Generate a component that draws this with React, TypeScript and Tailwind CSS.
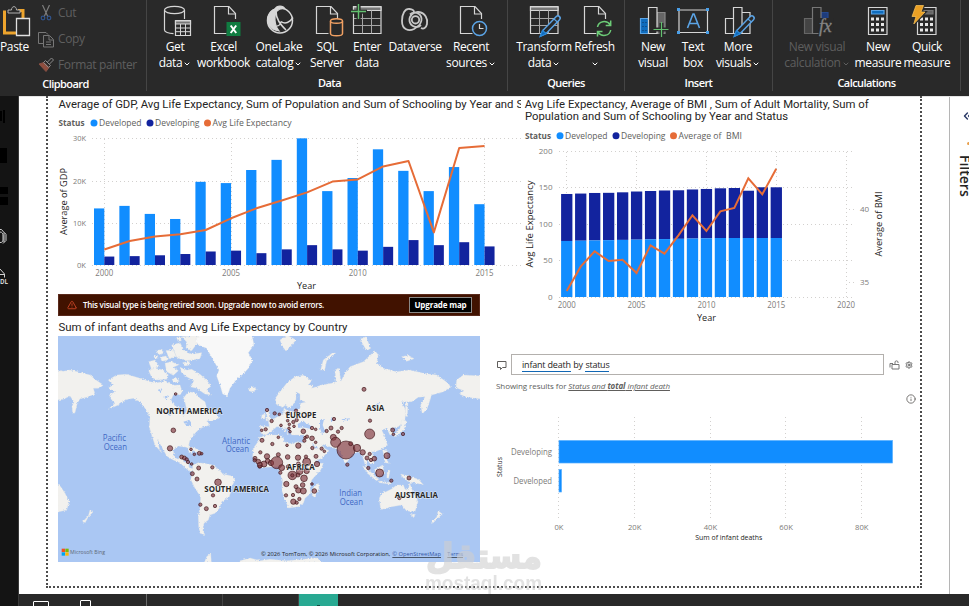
import type { ReactNode } from 'react'
import { TriangleAlert, Settings, Info, ChevronDown, ChevronsLeft } from 'lucide-react'

const BLUE = '#118dff'
const NAVY = '#12239e'
const ORANGE = '#e66c37'

const gdpDeveloped = [13.4, 14, 12.1, 10.9, 19.7, 19.4, 22.5, 24.9, 30, 17.5, 20.6, 27.4, 22.3, 17.5, 23.2, 14.4]
const gdpDeveloping = [2, 2.1, 2.3, 2.6, 3.2, 3.4, 2.8, 3.7, 4.7, 3.7, 3.4, 4.3, 5.9, 4.7, 5.4, 4.4]
const gdpLine = [153.5, 145, 140.5, 138.3, 134, 122.3, 112.3, 104.5, 96.4, 85.6, 83.4, 70.4, 65, 136.4, 52, 50]

const lifeTotal = [141.4, 142, 142.8, 143, 143.7, 144.8, 145.5, 146.2, 146.5, 147.6, 148.3, 149.2, 149.6, 145.9, 150.6, 150.6]
const bmiLine = [195, 170.7, 155.3, 165, 163.7, 177, 149.3, 157.7, 139.3, 119.3, 135, 115.3, 112, 82.3, 98.3, 72.7]

type LabelProps = {
  x: number
  y: number
  w?: number
  size?: number
  fill?: string
  weight?: number
  anchor?: 'start' | 'middle' | 'end'
  font?: string
  rotate?: boolean
  children: ReactNode
}

function Label({ x, y, w, size = 9, fill = '#605e5c', weight = 400, anchor = 'start', font = 'Open Sans', rotate, children }: LabelProps) {
  return (
    <text
      x={x}
      y={y}
      textLength={w}
      lengthAdjust="spacingAndGlyphs"
      fontSize={size}
      fill={fill}
      fontWeight={weight}
      textAnchor={anchor}
      fontFamily={`"${font}", "Noto Sans", sans-serif`}
      transform={rotate ? `rotate(-90 ${x} ${y})` : undefined}
    >
      {children}
    </text>
  )
}

/* ---------- ribbon icons, all on a 32px grid ---------- */

function Icon({ children }: { children: ReactNode }) {
  return (
    <svg width="32" height="32" viewBox="0 0 32 32" fill="none" stroke="#d6d6d6" strokeWidth="1.2" className="shrink-0 overflow-visible">
      {children}
    </svg>
  )
}

const Page = ({ x = 5.5 }: { x?: number }) => (
  <g transform={`translate(${x} 0)`}>
    <path d="M12 28.5H0V1.5h14.5l6.500 7V14" />
    <path d="M14 1.5v7.5h7" />
  </g>
)

const Pencil = () => (
  <g>
    <path d="M13 30.8l2-5.5L28.3 11.6c1-1 2.4-.8 3.2 0s.9 2.1 0 3.1L18.2 28.4z" fill="#292929" stroke="#5ba4e6" strokeWidth="1.5" />
    <path d="M12 31.5l2.4-6 4 3.200z" fill="#0f6cbd" stroke="#2b88d8" />
    <path d="M26 14l3.4 3" stroke="#5ba4e6" />
  </g>
)

const Grid = () => (
  <g>
    <path d="M2.5 1.5H30v27H2.5z" />
    <path d="M2.5 2H30v3.5H2.5z" fill="#777" />
    <path d="M11.5 5.5v23M20.5 5.5v23M3 13.5h27M3 20.5h27" strokeWidth="1" stroke="#a5a5a5" />
  </g>
)

const Calculator = () => (
  <g>
    <path d="M6.5 2.5H25v27H6.5z" />
    {[12.5, 18, 23.5].map((y) =>
      [9, 14, 19].map((x) => <rect key={`${x}-${y}`} x={x} y={y} width="3" height="3" fill="#e6e6e6" stroke="none" />),
    )}
  </g>
)

const icons: Record<string, ReactNode> = {
  get: (
    <Icon>
      <ellipse cx="15.5" cy="5" rx="10" ry="3.7" />
      <path d="M5.5 5v20c0 2 4 3.600 9 3.700M25.5 5v9" />
      <path d="M16.5 15.500h15v15h-15z" fill="#292929" />
      <path d="M16.5 16h15v3h-15z" fill="#777" />
      <path d="M21.5 19v11M26.5 19v11M17 23h14M17 26.700h14" strokeWidth="1" />
    </Icon>
  ),
  excel: (
    <Icon>
      <Page x={6.5} />
      <rect x="18.5" y="17" width="14" height="14" fill="#107c41" stroke="none" />
      <path d="M22.700 20.500l5.500 7.500M28.200 20.500l-5.500 7.500" stroke="#fff" strokeWidth="2" />
    </Icon>
  ),
  onelake: (
    <Icon>
      <circle cx="17" cy="15.5" r="12.5" strokeWidth="1.5" />
      <path d="M12 4c2-4 8-4 10 0-4-1-6 0-8 2-3 4-3 14 2 20-8-1-13-7-11-14 1-4 4-7 7-8z" fill="#d6d6d6" />
      <path d="M13 6c0 8 4 13 10 19M18 16.500c4 3 9 1 12-4M13.500 21c2 0 4-1.500 4.500-4.500" strokeWidth="1.5" />
    </Icon>
  ),
  sql: (
    <Icon>
      <Page />
      <path d="M19.5 16v12.500c0 3 12 3 12 0V16" fill="#292929" stroke="#f0a063" strokeWidth="1.5" />
      <ellipse cx="25.5" cy="16" rx="6" ry="2.3" fill="#292929" stroke="#f0a063" strokeWidth="1.5" />
    </Icon>
  ),
  enter: (
    <Icon>
      <Grid />
      <path d="M0 6.700h16M7.600-1v16" stroke="#292929" strokeWidth="4" />
      <path d="M0 6.500h15M7.500-1v15" stroke="#62c06f" strokeWidth="1.4" />
    </Icon>
  ),
  dataverse: (
    <Icon>
      <g strokeWidth="1.8" stroke="#c8c8c8">
        <circle cx="16.500" cy="14.800" r="3.700" />
        <path d="M22 20c-3.500 3.500-10.500 2-11.500-4-.8-5.500 4.500-9.500 9-9 7 1 9.500 7 8.500 12-.8 4-3.500 5.500-6 4" />
        <path d="M11 9.500C14.500 6 21.500 7.500 22.500 13.500c.8 5.500-4 8.500-7.500 10.500-5 2.500-12 1-12-8C3 8.500 6 3.500 10.500 4c2.500.300 5 1.500 4.500 3.500" />
      </g>
    </Icon>
  ),
  recent: (
    <Icon>
      <Page />
      <circle cx="24.5" cy="23.5" r="7" fill="#292929" stroke="#5ba4e6" strokeWidth="1.5" />
      <path d="M24.5 19v4.500h4" />
    </Icon>
  ),
  transform: (
    <Icon>
      <Grid />
      <Pencil />
    </Icon>
  ),
  refresh: (
    <Icon>
      <Page />
      <circle cx="25" cy="23.5" r="9" fill="#292929" stroke="none" />
      <path d="M18.5 22c1-6 9-7.500 13-2M31.700 15.500v5h-5M31.700 25c-1 6-9 7.500-13 2M18.500 31.500v-5h5" stroke="#6ccb77" strokeWidth="1.500" />
    </Icon>
  ),
  newVisual: (
    <Icon>
      <path d="M3.5 13.500h8v15h-8z" fill="#0f6cbd" stroke="#5ba4e6" />
      <path d="M20 7.500h8v21h-8z" fill="#666" stroke="#888" />
      <path d="M11.5 2.500H20v26h-8.500z" fill="#292929" />
      <path d="M6 17v9M9 17v9" stroke="#123e70" strokeDasharray="1 3" />
      <path d="M24.500 18v13M18 24.500h13" stroke="#292929" strokeWidth="4" />
      <path d="M24.500 17v15M16.500 24.500h15" stroke="#62c06f" strokeWidth="1.200" />
    </Icon>
  ),
  textBox: (
    <Icon>
      <path d="M2 5h28.500v22.500H2z" />
      <path d="M10.500 23l5.500-14h1l5.500 14M12.500 18.500h8" stroke="#5ba4e6" strokeWidth="1.600" />
      {[1.5, 30.5].map((x) =>
        [4.5, 27.5].map((y) => <rect key={`${x}-${y}`} x={x - 1.5} y={y - 1.5} width="3" height="3" fill="#4a9fe8" stroke="none" />),
      )}
    </Icon>
  ),
  more: (
    <Icon>
      <path d="M3.500 13.500h8v15h-8zM11.500 2.500H20v26h-8.500zM20 7.500h8v21h-8z" />
      <Pencil />
    </Icon>
  ),
  calc: (
    <Icon>
      <path d="M3.500 13.500h8v15h-8z" fill="#444" stroke="#666" />
      <path d="M20 7.500h7v6h-7z" fill="#1d3c7c" stroke="#25498f" />
      <path d="M11.500 2.500H20v26h-8.500z" fill="#292929" stroke="#777" />
      <rect x="17.500" y="13" width="15" height="17" fill="#292929" stroke="none" />
      <text x="18" y="26.500" fontSize="18" fontStyle="italic" fontFamily="'Liberation Serif', serif" fill="#858585" stroke="#858585" strokeWidth=".3">
        fx
      </text>
    </Icon>
  ),
  measure: (
    <Icon>
      <Calculator />
      <path d="M9.500 5.500H22V9H9.500z" fill="#0f6cbd" stroke="#5ba4e6" />
    </Icon>
  ),
  quick: (
    <Icon>
      <Calculator />
      <path d="M12 5.500h10V9H12z" fill="#666" stroke="#777" />
      <path d="M5 0h8.500l-2 6.500h4L2 21l2.500-9H0z" fill="#292929" stroke="#292929" />
      <path d="M5 .5h7.500L10 7h4L2.800 19 5 11.500H1z" fill="#eaa024" stroke="#ffc75a" strokeWidth=".7" />
    </Icon>
  ),
}

type ButtonProps = { icon: string; top: string; bottom?: string; width: string; menu?: boolean; disabled?: boolean }

function RibbonButton({ icon, top, bottom, width, menu, disabled }: ButtonProps) {
  return (
    <div className={`flex shrink-0 flex-col items-center whitespace-nowrap text-xs leading-4 tracking-[-0.35px] ${width} ${disabled ? 'text-[#5e5e5e]' : 'text-white'}`}>
      {icons[icon]}
      <span className="mt-0.5">{top}</span>
      <span className="flex h-4 items-center">
        {bottom}
        {menu && <ChevronDown size={8} strokeWidth={3} className="ml-px mt-px" />}
      </span>
    </div>
  )
}

function RibbonGroup({ name, className, children }: { name: string; className: string; children?: ReactNode }) {
  return (
    <section className={`flex h-[91px] shrink-0 flex-col border-r border-[#454545] pt-[5px] ${className}`}>
      <div className="flex h-[71px]">{children}</div>
      <h3 className="text-center text-[11px] font-semibold leading-4 tracking-[-0.55px] text-white">{name}</h3>
    </section>
  )
}

function Ribbon() {
  return (
    <header className="flex h-24 bg-[#292929]">
      <section className="flex h-[91px] w-[147px] shrink-0 flex-col border-r border-[#454545] pt-[5px]">
        <div className="flex h-[71px]">
          <div className="w-[38px] text-xs leading-4 tracking-[-0.35px] text-white">
            <svg width="32" height="32" viewBox="0 0 32 32" fill="none">
              <path d="M4.500 5.500V28H17M18 5.500h5V13" stroke="#eda42d" strokeWidth="3" />
              <path d="M8 8V5h3.500c0-4.500 5-4.500 5 0H20v3z" fill="#292929" stroke="#b0b0b0" />
              <path d="M16.500 13.500h13v17h-13z" fill="#292929" stroke="#e0e0e0" strokeWidth="1.300" />
            </svg>
            <span className="mt-0.5 block">Paste</span>
          </div>
          <div className="-mt-[5px] flex flex-col text-xs leading-4 tracking-[-0.35px] text-[#5f5f5f]">
            <div className="flex h-[26px] shrink-0 items-center gap-1">
              <svg width="16" height="16" viewBox="0 0 16 16" fill="none" stroke="#7d7d7d" strokeWidth="1.200">
                <path d="M4.500 0l5.500 12M11.500 0L6 12" />
                <g stroke="#31548c">
                  <circle cx="5" cy="13" r="1.800" />
                  <circle cx="11" cy="13" r="1.800" />
                </g>
              </svg>
              <span>Cut</span>
            </div>
            <div className="flex h-[26px] shrink-0 items-center gap-1">
              <svg width="16" height="17" viewBox="0 0 16 17" fill="none" stroke="#777">
                <path d="M5 12.500H.5V1.500H8l2 2M5.500 4.500h6l4 4v7.500h-10zM11 5v4h4M8 11h5M8 13.500h5" />
              </svg>
              <span>Copy</span>
            </div>
            <div className="flex h-[26px] shrink-0 items-center gap-1">
              <svg width="16" height="16" viewBox="0 0 16 16" fill="none" stroke="#8a8a8a">
                <path d="M1 7l5-1.500 5 5-3 4z" fill="#8f4e3f" stroke="#885044" />
                <path d="M5.500 5.500l2-2 5 5-2 2zM9.500 5l4-4 2 2-4 4" />
              </svg>
              <span>Format painter</span>
            </div>
          </div>
        </div>
        <h3 className="pr-[15px] text-center text-[11px] font-semibold leading-4 tracking-[-0.55px] text-white">Clipboard</h3>
      </section>
      <RibbonGroup name="Data" className="w-[361px] pl-[5px]">
        <RibbonButton icon="get" top="Get" bottom="data" menu width="w-[46px]" />
        <RibbonButton icon="excel" top="Excel" bottom="workbook" width="w-[51px]" />
        <RibbonButton icon="onelake" top="OneLake" bottom="catalog" menu width="w-[60px]" />
        <RibbonButton icon="sql" top="SQL" bottom="Server" width="w-9" />
        <RibbonButton icon="enter" top="Enter" bottom="data" width="w-11" />
        <RibbonButton icon="dataverse" top="Dataverse" width="w-[52px]" />
        <RibbonButton icon="recent" top="Recent" bottom="sources" menu width="w-[60px]" />
      </RibbonGroup>
      <RibbonGroup name="Queries" className="w-[117px] pl-[7px] pr-[7px]">
        <RibbonButton icon="transform" top="Transform" bottom="data" menu width="w-[58px]" />
        <RibbonButton icon="refresh" top="Refresh" menu width="w-[43px]" />
      </RibbonGroup>
      <RibbonGroup name="Insert" className="w-[148px] pl-2 pr-2">
        <RibbonButton icon="newVisual" top="New" bottom="visual" width="w-10" />
        <RibbonButton icon="textBox" top="Text" bottom="box" width="w-10" />
        <RibbonButton icon="more" top="More" bottom="visuals" menu width="w-[50px]" />
      </RibbonGroup>
      <RibbonGroup name="Calculations" className="w-[188px] pl-1.5 pr-1.5">
        <RibbonButton icon="calc" top="New visual" bottom="calculation" menu disabled width="w-[76px]" />
        <RibbonButton icon="measure" top="New" bottom="measure" width="w-[46px]" />
        <RibbonButton icon="quick" top="Quick" bottom="measure" width="w-[52px]" />
      </RibbonGroup>
    </header>
  )
}

/* ---------- visuals ---------- */

const gridStroke = { stroke: '#d2d0ce', strokeWidth: 1, strokeDasharray: '1 3' }
const titleProps = { size: 11.7, fill: '#252423', font: 'Roboto' }

function GdpChart() {
  const x = (i: number) => 46.3 + i * 25.35
  return (
    <svg width="466" height="198" viewBox="0 0 466 198" className="shrink-0">
      <Label x={0.5} y={11.5} w={455} {...titleProps}>
        Average of GDP, Avg Life Expectancy, Sum of Population and Sum of Schooling by Year and
      </Label>
      <svg x="458.500" y="0" width="4.500" height="16">
        <Label x={0} y={11.5} {...titleProps}>S</Label>
      </svg>
      <Label x={0.5} y={29.8} w={26} weight={700}>Status</Label>
      <circle cx="36" cy="27" r="3.5" fill={BLUE} />
      <Label x={41} y={29.8} w={42.5}>Developed</Label>
      <circle cx="92" cy="27" r="3.5" fill={NAVY} />
      <Label x={97} y={29.8} w={44.5}>Developing</Label>
      <circle cx="149.500" cy="27" r="3.5" fill={ORANGE} />
      <Label x={154.5} y={29.8} w={79}>Avg Life Expectancy</Label>

      {[30, 20, 10, 0].map((v) => (
        <g key={v}>
          <line x1="34" x2="464" y1={Math.round(169 - v * 4.222) + 0.5} y2={Math.round(169 - v * 4.222) + 0.5} {...gridStroke} />
          <Label x={28} y={172 - v * 4.222} size={8} w={v ? 13 : 9} anchor="end" fill="#7d7b79">{`${v}K`}</Label>
        </g>
      ))}
      {[0, 5, 10, 15].map((i) => (
        <g key={i}>
          <line x1={Math.floor(x(i)) + 0.5} x2={Math.floor(x(i)) + 0.5} y1="43" y2="169" {...gridStroke} />
          <Label x={x(i)} y={179.8} w={18} size={8.5} anchor="middle" fill="#7d7b79">{2000 + i}</Label>
        </g>
      ))}
      {gdpDeveloped.map((v, i) => (
        <g key={i}>
          <rect x={x(i) - 10.3} y={169 - v * 4.222} width="10.3" height={v * 4.222} fill={BLUE} />
          <rect x={x(i)} y={169 - gdpDeveloping[i] * 4.222} width="10" height={gdpDeveloping[i] * 4.222} fill={NAVY} />
        </g>
      ))}
      <polyline points={gdpLine.map((v, i) => `${x(i)},${v}`).join(' ')} fill="none" stroke={ORANGE} strokeWidth="2" strokeLinejoin="round" />
      <Label x={9} y={139} size={9.5} w={67} rotate fill="#252423">Average of GDP</Label>
      <Label x={248.5} y={193} size={9.5} w={19} anchor="middle" fill="#252423">Year</Label>
    </svg>
  )
}

function BmiChart() {
  const x = (i: number) => 42.7 + i * 13.97
  const k = 0.7285
  return (
    <svg width="370" height="234" viewBox="0 0 370 234" className="shrink-0">
      <Label x={0.7} y={11.5} w={344} {...titleProps}>
        Avg Life Expectancy, Average of BMI , Sum of Adult Mortality, Sum of
      </Label>
      <Label x={1} y={24.3} w={263} {...titleProps}>Population and Sum of Schooling by Year and Status</Label>
      <Label x={1} y={42.7} w={26} weight={700}>Status</Label>
      <circle cx="36" cy="39.7" r="3.5" fill={BLUE} />
      <Label x={41} y={42.7} w={42.5}>Developed</Label>
      <circle cx="92" cy="39.7" r="3.5" fill={NAVY} />
      <Label x={97} y={42.7} w={44.5}>Developing</Label>
      <circle cx="149.500" cy="39.7" r="3.5" fill={ORANGE} />
      <Label x={154.5} y={42.7} w={43}>Average of</Label>
      <Label x={202} y={42.7} w={16}>BMI</Label>

      {[200, 150, 100, 50, 0].map((v) => (
        <g key={v}>
          <line x1="35" x2="328" y1={Math.floor(201 - v * k) + 0.5} y2={Math.floor(201 - v * k) + 0.5} {...gridStroke} />
          <Label x={28.5} y={203.6 - v * k} size={8} anchor="end" fill="#7d7b79">{v}</Label>
        </g>
      ))}
      {[0, 5, 10, 15, 20].map((i) => (
        <g key={i}>
          <line x1={Math.floor(x(i)) + 0.5} x2={Math.floor(x(i)) + 0.5} y1="56" y2="201" {...gridStroke} />
          <Label x={x(i)} y={212} w={18} size={8.5} anchor="middle" fill="#7d7b79">{2000 + i}</Label>
        </g>
      ))}
      {lifeTotal.map((v, i) => {
        const low = 76.9 + Math.min(i, 11) * 0.37
        return (
          <g key={i}>
            <rect x={x(i) - 5.6} y={201 - v * k} width="11.3" height={(v - low) * k} fill={NAVY} />
            <rect x={x(i) - 5.6} y={201 - low * k} width="11.3" height={low * k} fill={BLUE} />
          </g>
        )
      })}
      <polyline points={bmiLine.map((v, i) => `${x(i)},${v}`).join(' ')} fill="none" stroke={ORANGE} strokeWidth="2" />
      <path d="M325 113.500h5M325 186.500h5" {...gridStroke} />
      <Label x={336} y={116} size={8} fill="#7d7b79">40</Label>
      <Label x={336} y={189} size={8} fill="#7d7b79">35</Label>
      <Label x={9} y={171.5} size={9.5} w={87} rotate fill="#252423">Avg Life Expectancy</Label>
      <Label x={358} y={160.5} size={9.5} w={65} rotate fill="#252423">Average of BMI</Label>
      <Label x={182.5} y={225} size={9.5} w={19} anchor="middle" fill="#252423">Year</Label>
    </svg>
  )
}

// western hemisphere, plus the wrapped edges of Asia and Australia
const landWest = [
  'M50 150 70 154 90 150 120 157 150 165 165 178 190 195 178 205 160 205 165 222 140 232 120 236 112 250 105 278 98 280 96 260 102 245 90 228 70 238 50 240Z',
  'M205 180 230 165 260 163 300 175 330 185 350 188 375 184 400 196 420 195 425 210 400 225 393 240 405 258 425 268 430 290 440 272 436 250 430 235 445 215 465 218 480 235 495 245 500 265 520 270 537 295 520 300 500 303 510 315 480 325 465 340 450 360 446 375 457 395 450 400 440 382 415 378 400 390 402 412 415 418 420 408 433 406 430 425 445 430 448 443 462 447 455 455 440 447 420 428 400 420 380 408 365 380 352 358 358 385 365 398 345 375 335 345 328 320 330 290 315 265 300 245 280 235 255 240 235 255 205 268 225 250 215 240 208 225 225 215 205 205 218 195Z',
  'M420 142 440 150 455 148 480 163 500 180 513 198 500 210 515 225 495 222 470 205 450 200 462 182 440 170 425 158Z',
  'M325 150 345 145 370 150 385 165 380 178 350 180 335 172Z',
  'M326 125 345 120 358 140 335 148Z',
  'M375 130 395 125 415 135 400 142 415 152 400 166 380 155Z',
  'M395 75 420 68 432 92 455 102 485 98 480 116 440 122 410 112Z',
  'M425 50 475 46 488 58 470 72 455 92 438 84 440 66Z',
  'M378 92 400 90 408 108 388 116Z',
  'M398 205 415 200 428 212 420 225 402 220Z',
  'M350 92 366 88 370 100 356 104Z M360 112 378 108 384 120 366 124Z M410 52 420 50 424 62 414 64Z',
  'M342 108 352 106 354 114 344 116Z M396 178 412 174 418 184 402 188Z M428 128 446 124 452 134 434 138Z',
  'M420 380 424 380 M440 383 460 382 478 392 488 398 480 402 462 392Z',
  'M458 435 475 428 490 430 520 435 540 452 548 462 575 468 585 480 575 500 568 530 545 545 538 565 525 580 510 585 505 600 492 610 488 630 495 644 480 640 476 620 475 590 480 560 482 530 465 505 452 478 458 460Z',
  'M625 205 640 200 649 208 638 216 628 213Z',
  'M50 488 62 500 75 520 88 545 80 570 50 577Z',
  'M150 570 159 576 145 590 135 609 128 605 145 588Z',
  'M500 710 512 700 514 726 492 730Z',
]

const landEast = [
  'M33 340 31 318 58 320 55 302 75 295 90 285 100 280 102 264 112 272 130 275 150 266 152 250 168 246 150 240 150 222 138 215 138 238 132 250 118 264 106 256 98 262 78 252 76 235 90 215 110 190 135 170 160 166 185 182 175 195 190 195 185 205 215 195 245 190 258 185 255 150 268 145 272 185 285 160 300 140 340 125 375 92 385 105 380 130 400 145 440 155 480 150 520 160 560 165 595 190 602 202 580 215 545 225 532 265 517 282 512 255 525 230 505 232 485 245 455 245 467 270 465 300 445 320 422 325 432 342 420 345 410 325 395 330 405 350 412 375 395 387 375 395 365 395 372 415 372 430 360 432 350 415 350 440 362 462 350 452 343 425 335 400 320 395 305 405 292 425 285 430 275 405 265 390 240 380 215 372 225 386 237 392 215 415 190 425 175 395 160 365 162 345 125 345 118 330 103 322 115 345 95 320 80 320 62 335 48 345Z',
  'M28 352 55 345 85 345 100 352 102 365 125 372 145 365 165 370 172 385 187 410 200 430 220 430 212 450 185 480 180 500 182 520 165 535 160 550 145 560 115 564 108 545 95 510 98 480 88 455 85 440 65 440 35 443 20 430 8 410 10 385 28 360Z',
  'M205 490 207 505 195 531 187 528 188 505Z',
  'M212 150 220 120 248 98 257 100 230 122 224 150Z',
  'M90 60 112 46 138 60 125 75 108 93 98 80Z',
  'M46 268 55 270 58 290 66 300 46 303 52 288Z M36 284 46 282 44 297 34 296Z',
  'M330 58 348 50 362 85 350 92Z M455 110 475 106 492 116 470 124Z',
  'M455 300 470 302 462 330 440 348 430 350 450 325Z',
  'M467 242 474 246 472 290 466 288Z',
  'M338 438 350 445 386 478 380 482 350 458Z M372 450 398 435 402 460 385 470Z M385 483 425 488 420 492 388 488Z',
  'M398 390 412 392 410 420 418 430 406 428Z M412 455 420 450 416 475 410 472Z',
  'M452 462 475 468 505 478 520 494 500 490 478 486 460 474Z',
  'M388 535 394 522 425 507 440 495 460 495 465 508 475 510 479 490 490 518 504 545 495 575 470 573 455 555 425 560 392 569Z M484 582 496 583 490 593Z',
  'M565 573 577 582 562 596 548 610 543 605 560 592Z',
  'M620 180 640 165 695 168 695 237 650 232 628 222 642 212 618 203Z',
  'M-30 722 0 714 30 722 60 718 110 722 200 714 220 728-30 730Z',
]

const bubbles: [number, number, number][] = [
  [-223, 222, 4], [-230, 331, 7], [-240, 385, 8], [-177, 388, 4], [-167, 403, 4], [-152, 400, 6], [-145, 401, 4], [-205, 411, 6], [-197, 414, 6], [-190, 418, 5],
  [-186, 426, 5], [-175, 432, 4], [-154, 444, 6], [-113, 442, 5], [-173, 461, 6], [-159, 477, 6], [-96, 487, 10], [-111, 526, 5], [-149, 554, 5], [-131, 566, 6], [-105, 558, 5],
  [51, 270, 5], [35, 331, 4], [47, 328, 5], [65, 303, 5], [74, 280, 5], [88, 283, 4], [138, 272, 5], [113, 302, 4], [130, 306, 5], [93, 316, 4], [117, 325, 4],
  [132, 319, 4], [160, 334, 7], [186, 324, 5], [197, 328, 4], [120, 335, 4], [140, 300, 5], [113, 280, 5], [118, 313, 4], [85, 352, 4], [36, 361, 6], [67, 372, 5],
  [111, 376, 4], [145, 377, 8], [163, 362, 5], [171, 350, 5], [186, 355, 7], [165, 353, 4], [187, 384, 5], [215, 386, 5], [223, 394, 4], [197, 367, 4],
  [230, 333, 5], [243, 324, 6], [264, 335, 5], [275, 324, 5], [252, 297, 5], [250, 352, 9], [257, 367, 15], [288, 390, 27], [302, 371, 6], [321, 384, 11],
  [342, 208, 6], [360, 302, 5], [359, 342, 15], [428, 330, 6], [430, 343, 4], [459, 342, 5], [338, 397, 8], [351, 414, 6], [359, 402, 5], [363, 420, 5], [373, 416, 7],
  [411, 407, 9], [355, 444, 5], [389, 459, 12], [424, 482, 5], [477, 474, 6], [448, 534, 5], [292, 434, 5], [31, 397, 5], [51, 409, 8], [85, 404, 6], [113, 411, 7],
  [144, 413, 8], [198, 409, 6], [201, 432, 8], [15, 415, 6], [14, 421, 5], [25, 425, 7], [30, 435, 8], [42, 432, 9], [53, 423, 7], [63, 429, 8], [80, 428, 18], [29, 440, 5],
  [95, 443, 9], [91, 458, 5], [115, 440, 6], [127, 466, 13], [127, 466, 5], [149, 454, 10], [144, 465, 6], [170, 426, 12], [162, 475, 10], [168, 410, 5], [170, 453, 8],
  [145, 432, 6], [158, 495, 7], [138, 500, 6], [145, 511, 8], [160, 513, 9], [109, 492, 8], [108, 526, 5], [129, 525, 5], [148, 537, 5], [130, 545, 8], [140, 548, 5],
  [186, 492, 4], [193, 513, 7],
]

function WorldMap() {
  return (
    <svg width="422" height="226" viewBox="54 48 1266 678" className="block">
      <defs>
        <filter id="coast" x="-5%" y="-5%" width="110%" height="110%">
          <feTurbulence type="fractalNoise" baseFrequency="0.22" numOctaves="3" seed="4" result="n" />
          <feDisplacementMap in="SourceGraphic" in2="n" scale="9" xChannelSelector="R" yChannelSelector="G" />
        </filter>
      </defs>
      <rect x="54" y="48" width="1266" height="678" fill="#aac7f3" />
      <g filter="url(#coast)">
        <g fill="#f2f1ee" stroke="#e1e4e5" strokeWidth="1">
          {landWest.map((d) => <path key={d} d={d} />)}
          <path d="M466 60 480 40 635 40 642 75 625 98 637 120 625 145 612 160 590 178 570 205 562 228 548 222 540 195 530 168 537 150 515 112 500 85 475 75Z" fill="#f8f8f8" />
        </g>
        <g transform="translate(630 0)">
          <g fill="#f2f1ee" stroke="#e1e4e5" strokeWidth="1">
            {landEast.map((d) => <path key={d} d={d} />)}
          </g>
          {/* inland seas and lakes */}
          <g fill="#aac7f3">
            <path d="M143 312 160 302 168 310 186 318 180 326 158 322 145 324Z" />
            <path d="M210 300 222 298 218 315 226 335 216 342 210 325Z" />
            <path d="M242 296 250 294 250 302 243 304Z M275 298 300 295 298 299 277 302Z M370 262 388 245 390 248 374 266Z" />
            <path d="M165 440 173 440 172 450 165 449Z M186 370 205 385 200 388 190 380Z" />
          </g>
        </g>
        <path d="M430 305 448 300 455 310 448 322 438 316Z M370 232 385 226 380 238Z M352 210 368 205 362 216Z M385 270 390 268 392 288 386 286Z" fill="#aac7f3" />
      </g>
      <g transform="translate(630 0)" fill="#7d3038" fillOpacity=".64" stroke="#43181c" strokeWidth="2">
        {bubbles.map(([cx, cy, r], i) => <circle key={i} cx={cx} cy={cy} r={r} />)}
      </g>
      <g stroke="#fff" strokeWidth="3" strokeOpacity=".6" paintOrder="stroke">
        <Label x={349} y={281} w={198} size={24} weight={700} fill="#252525">NORTH AMERICA</Label>
        <Label x={493} y={515} w={194} size={24} weight={700} fill="#252525">SOUTH AMERICA</Label>
        <Label x={737} y={294} w={92} size={24} weight={700} fill="#252525">EUROPE</Label>
        <Label x={740} y={449} w={84} size={24} weight={700} fill="#252525">AFRICA</Label>
        <Label x={979} y={274} w={54} size={24} weight={700} fill="#252525">ASIA</Label>
        <Label x={1064} y={533} w={130} size={24} weight={700} fill="#252525">AUSTRALIA</Label>
      </g>
      <Label x={188} y={364} w={70} size={25} fill="#3f67c4">Pacific</Label>
      <Label x={191} y={391} w={70} size={25} fill="#3f67c4">Ocean</Label>
      <Label x={546} y={371} w={84} size={25} fill="#3f67c4">Atlantic</Label>
      <Label x={557} y={397} w={70} size={25} fill="#3f67c4">Ocean</Label>
      <Label x={898} y={528} w={68} size={25} fill="#3f67c4">Indian</Label>
      <Label x={899} y={555} w={70} size={25} fill="#3f67c4">Ocean</Label>
      <path d="M65 686h10v10H65z" fill="#f25022" />
      <path d="M76 686h10v10H76z" fill="#7fba00" />
      <path d="M65 697h10v10H65z" fill="#00a4ef" />
      <path d="M76 697h10v10H76z" fill="#ffb900" />
      <Label x={90} y={703} w={105} size={18} fill="#5d6776">Microsoft Bing</Label>
      <Label x={663} y={708} w={388} size={17} fill="#222">© 2026 TomTom, © 2026 Microsoft Corporation,</Label>
      <g textDecoration="underline">
        <Label x={1057} y={708} w={146} size={17} fill="#3457a8">© OpenStreetMap</Label>
        <Label x={1222} y={708} w={47} size={17} fill="#3457a8">Terms</Label>
      </g>
    </svg>
  )
}

function MapVisual() {
  return (
    <div className="w-[422px] shrink-0">
      <div className="flex h-[22px] items-center border border-[#5a2a1c] bg-[#411200] pl-2 pr-[7px] text-[8px] font-semibold text-white">
        <TriangleAlert size={10} strokeWidth={1.8} className="text-[#e8502e]" />
        <span className="ml-1.5 whitespace-nowrap tracking-[-0.24px]">This visual type is being retired soon. Upgrade now to avoid errors.</span>
        <button className="ml-auto h-4 w-[63px] whitespace-nowrap border border-[#8a8886] bg-black text-[8px] font-bold leading-3 tracking-[-0.15px]">Upgrade map</button>
      </div>
      <svg width="422" height="20" className="block">
        <Label x={0.5} y={15.3} w={289} {...titleProps}>Sum of infant deaths and Avg Life Expectancy by Country</Label>
      </svg>
      <WorldMap />
    </div>
  )
}

function QnaVisual() {
  return (
    <div className="ml-4 w-[420px] pt-[60px]">
      <div className="flex h-[21px] items-center">
        <svg width="10" height="10" viewBox="0 0 10 10" fill="none" stroke="#605e5c" className="ml-px">
          <path d="M.5 1.500h8.500v6H5.500L3.500 9.500v-2h-3z" />
        </svg>
        <div className="ml-1 flex h-[21px] w-[373px] items-center border border-[#b3b0ad] pl-2.5 text-[9px] text-[#252423]">
          <span className="border-b border-[#1267b4] leading-[13px] tracking-[-0.2px]">infant death</span>
          <span className="px-[2.5px] tracking-[-0.2px]">by</span>
          <span className="border-b border-[#1267b4] leading-[13px] tracking-[-0.25px]">status</span>
        </div>
        <svg width="11" height="10" viewBox="0 0 11 10" fill="none" stroke="#777" className="ml-[5px]">
          <path d="M3 4.500h7v4.500H3zM6 4V2c0-1.500 3-1.500 3 0v1M1 7.500v-4h3" />
        </svg>
        <Settings size={8} strokeWidth={3} className="ml-[5px] text-[#666]" />
      </div>
      <p className="mt-[3px] whitespace-nowrap text-[8px] leading-4 tracking-[-0.07px] text-[#605e5c]">
        Showing results for{' '}
        <span className="italic underline">
          Status and <b>total</b> infant death
        </span>
      </p>
      <div className="flex h-[17px] justify-end">
        <Info size={10} strokeWidth={2} className="text-[#605e5c]" />
      </div>
      <svg width="420" height="140" viewBox="0 0 420 140" className="block">
        {[0, 1, 2, 3, 4].map((i) => (
          <g key={i}>
            <line x1={Math.floor(62.7 + i * 75.7) + 0.5} x2={Math.floor(62.7 + i * 75.7) + 0.5} y1="6" y2="109" {...gridStroke} />
            <Label x={63 + i * 75.7} y={119} size={8} w={i ? 13.5 : 9} anchor="middle" fill="#7d7b79">{`${i * 20}K`}</Label>
          </g>
        ))}
        <rect x="63" y="29.500" width="333.500" height="22.500" fill={BLUE} stroke="#58b0ff" strokeWidth=".7" />
        <rect x="63" y="58.500" width="2.500" height="22.500" fill={BLUE} stroke="#58b0ff" strokeWidth=".7" />
        <Label x={56} y={44.4} size={8.5} w={41} anchor="end" fill="#7d7b79">Developing</Label>
        <Label x={56} y={73.4} size={8.5} w={38.5} anchor="end" fill="#7d7b79">Developed</Label>
        <Label x={6} y={66} size={7.5} w={20} rotate fill="#252423">Status</Label>
        <Label x={232.8} y={129} size={7.5} w={67} anchor="middle" fill="#252423">Sum of infant deaths</Label>
      </svg>
    </div>
  )
}

function SideRail() {
  return (
    <aside className="w-[19px] shrink-0 overflow-hidden border-r border-[#3a3a3a] bg-[#141414]">
      <svg width="18" height="510" viewBox="0 0 18 510" fill="none">
        <path d="M0 15h2v10H0zM3 14h2v13H3zM0 52h7v15H0zM0 91h8v7H0zM0 101h8v8H0z" fill="#000" />
        <path d="M0 133.500h1.500l2.500 3V146M0 136c2.500 0 3 2 3 4v4c0 2-1 2.500-3 2.500M4.500 136.500l1.500 2v6l-3 3" stroke="#d0d0d0" />
        <path d="M0 173l4.500 5v3.500M0 178.500h4.500" stroke="#d0d0d0" />
        <text x="0" y="187.500" fontSize="7" fontWeight="700" fontFamily="'Open Sans', sans-serif" fill="#d0d0d0" textLength="8" lengthAdjust="spacingAndGlyphs">DL</text>
      </svg>
    </aside>
  )
}

export default function App() {
  return (
    <div className="relative h-[606px] w-[969px] overflow-hidden bg-white font-['Open_Sans','Noto_Sans',sans-serif]">
      <Ribbon />
      <div className="flex h-[510px]">
        <SideRail />
        <div className="min-w-0 flex-1">
          <div className="flex h-[498px] border-t border-[#e4e4e4]">
            <main className="w-[930px] shrink-0">
              <div className="-mt-px ml-[27px] h-[492px] w-[876px] border-2 border-t-0 border-dotted border-[#4d4d4d]">
                <div className="flex h-[198px] pl-2.5">
                  <GdpChart />
                  <BmiChart />
                </div>
                <div className="flex pl-2.5">
                  <MapVisual />
                  <QnaVisual />
                </div>
              </div>
            </main>
            <aside className="flex w-5 flex-col overflow-hidden border-l border-[#b5b5b5] pl-[11px] pt-3">
              <ChevronsLeft size={14} strokeWidth={2.5} className="shrink-0 text-[#2b3a67]" />
              <span className="ml-1.5 mt-[19px] h-[3px] w-2 shrink-0 rounded-l-full bg-[#e8a04c]" />
              <span className="-ml-1 mt-2.5 shrink-0 text-sm font-semibold leading-5 text-[#252423] [writing-mode:vertical-rl]">
                <span className="relative left-1.5">Filters</span>
              </span>
            </aside>
          </div>
          <footer className="flex h-3 overflow-hidden bg-[#292929]">
            <div className="flex w-32 shrink-0 border-r border-[#6a6a6a] pl-[14px] pt-[7px]">
              <span className="h-4 w-4 rounded-[1px] border-[1.5px] border-white" />
              <span className="ml-[31px] -mt-px h-4 w-[11px] rounded-[1px] border-[1.5px] border-white" />
            </div>
            <div className="w-[76px] shrink-0 border-r border-[#444]" />
            <div className="w-[76px] shrink-0 border-r border-[#444]" />
            <div className="flex w-[39px] shrink-0 items-end justify-center bg-[#28a992]">
              <span className="h-px w-[3px] bg-[#124c42]" />
            </div>
          </footer>
        </div>
      </div>

      {/* watermark */}
      <div className="absolute left-[424px] top-[536px] w-[119px] opacity-60">
        <svg width="119" height="60" viewBox="0 0 119 60">
          <text x="118" y="32" direction="rtl" textLength="116" lengthAdjust="spacingAndGlyphs" fontSize="34" fontWeight="700" fontFamily="'DejaVu Sans', sans-serif" fill="#cfcfcf" stroke="#cfcfcf" strokeWidth="1.800">مستقل</text>
          <text x="1" y="54" textLength="117" lengthAdjust="spacingAndGlyphs" fontSize="20" fontWeight="700" fontFamily="'Liberation Sans', sans-serif" fill="#cfcfcf">mostaql.com</text>
        </svg>
      </div>
    </div>
  )
}
